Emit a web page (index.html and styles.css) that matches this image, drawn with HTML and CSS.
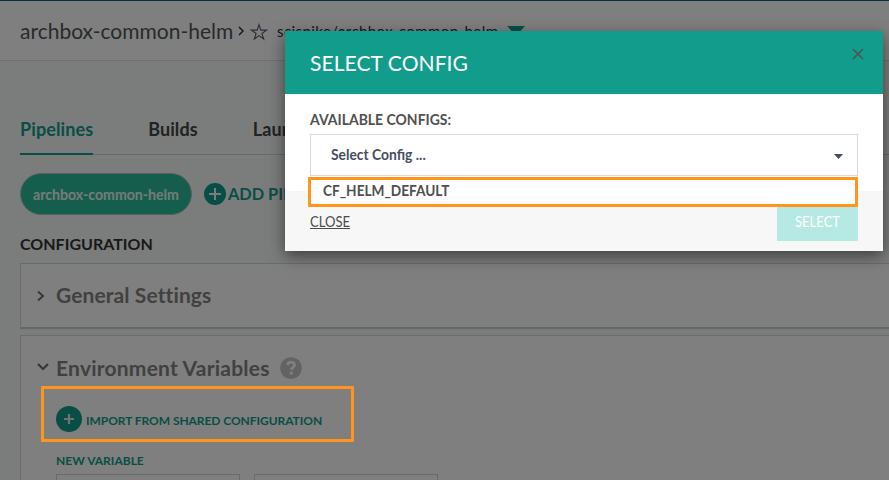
FILE: index.html
```html
<!DOCTYPE html>
<html lang="en">
<head>
<meta charset="utf-8">
<title>archbox-common-helm</title>
<link rel="stylesheet" href="styles.css">
</head>
<body>
<div class="page">
  <header class="topbar">
    <span class="repo">archbox-common-helm</span>
    <svg class="crumb" width="7" height="10" viewBox="0 0 7 10"><path d="M1 1l4 4-4 4" fill="none" stroke="#333" stroke-width="1.5"/></svg>
    <svg class="star" width="18" height="18" viewBox="0 0 18 18"><path d="M9 1.6l1.8 5.5h5.7l-4.6 3.4 1.8 5.5L9 12.6 4.3 16l1.8-5.5-4.6-3.4h5.7z" fill="none" stroke="#565c70" stroke-width="1.1"/></svg>
    <span class="path">scispike/archbox-common-helm</span>
    <svg class="drop" width="18" height="10" viewBox="0 0 18 10"><path d="M0 0h18l-9 10z" fill="#119c8c"/></svg>
  </header>
  <main class="content">
    <nav class="tabs">
      <a class="tab active"><span>Pipelines</span></a>
      <a class="tab"><span>Builds</span></a>
      <a class="tab"><span>Launch</span></a>
    </nav>
    <div class="pipelines">
      <span class="pill"><span>archbox-common-helm</span></span>
      <svg width="22" height="22" viewBox="0 0 22 22"><circle cx="11" cy="11" r="11" fill="#119c8c"/><path d="M5 11h12M11 5v12" stroke="#f5fbf9" stroke-width="2"/></svg>
      <span class="add">ADD PIPELINE</span>
    </div>
    <h2>CONFIGURATION</h2>
    <section class="card general">
      <svg class="arrow" width="8" height="12" viewBox="0 0 8 12"><path d="M1 1.5l5 4.5-5 4.5" fill="none" stroke="#6e6e6e" stroke-width="2"/></svg>
      <h3 class="gs">General Settings</h3>
    </section>
    <section class="card env">
      <div class="env-head">
        <svg class="arrow-down" width="12" height="8" viewBox="0 0 12 8"><path d="M1 1l5 5 5-5" fill="none" stroke="#6e6e6e" stroke-width="2.2"/></svg>
        <h3 class="ev">Environment Variables</h3>
        <svg class="help" width="22" height="22" viewBox="0 0 22 22"><circle cx="11" cy="11" r="10.8" fill="#c6c6c6"/><path d="M7.5 8.2C7.7 6.2 9.2 5.1 11.1 5.1c2 0 3.5 1.1 3.5 2.9 0 2.4-3.2 2.4-3.2 5" fill="none" stroke="#fff" stroke-width="2.6"/><path d="M9.8 14.6h3v3h-3z" fill="#fff"/></svg>
      </div>
      <div class="import">
        <svg width="26" height="26" viewBox="0 0 26 26"><circle cx="13" cy="13" r="13" fill="#119c8c"/><path d="M8 13h10M13 8v10" stroke="#e4e4e4" stroke-width="2.2"/></svg>
        <span>IMPORT FROM SHARED CONFIGURATION</span>
      </div>
      <div class="newvar"><span>NEW VARIABLE</span></div>
      <div class="fields"><div class="field"></div><div class="field"></div></div>
    </section>
  </main>
</div>
<div class="overlay"></div>
<div class="mark mark-import"></div>
<div class="modal">
  <div class="modal-head">
    <span class="modal-title">SELECT CONFIG</span>
    <svg class="close" width="12" height="12" viewBox="0 0 12 12"><path d="M1 1l10 10M11 1L1 11" stroke="#505457" stroke-width="1.6"/></svg>
  </div>
  <div class="modal-body">
    <div class="label"><span>AVAILABLE CONFIGS:</span></div>
    <div class="select">
      <span>Select Config ...</span>
      <svg width="9" height="5" viewBox="0 0 9 5"><path d="M0 0h9L4.5 5z" fill="#454e5e"/></svg>
    </div>
  </div>
  <div class="modal-foot">
    <span class="close-link">CLOSE</span>
    <span class="select-btn"><span>SELECT</span></span>
  </div>
  <div class="option"><span>CF_HELM_DEFAULT</span></div>
</div>
</body>
</html>
```
FILE: styles.css
```css
* { box-sizing: border-box; }
body { margin: 0; font-family: Lato, "Liberation Sans", sans-serif; }
span, h2, h3 { white-space: nowrap; }
svg { display: block; flex: none; }
.page { width: 889px; height: 480px; overflow: hidden; background: #f6fbf9; }
.topbar { display: flex; height: 61px; border-top: 1px solid #006775; border-bottom: 1px solid #dce2e0; background: #fff; padding-left: 20px; }
.repo { width: 218px; font-size: 21px; line-height: 60px; color: #4e5658; }
.crumb { margin-top: 25px; }
.star { margin: 22px 9px 0 5px; }
.path { width: 230px; font-size: 15px; letter-spacing: .43px; line-height: 61px; color: #2e3236; }
.drop { margin-top: 25px; }
.content { padding: 44px 0 0 20px; }
.tabs { display: flex; gap: 55px; height: 50px; border-bottom: 1px solid #d0d6d4; }
.tab { height: 50px; font-size: 18px; letter-spacing: .1px; font-weight: 700; line-height: 48px; color: #444; }
.active { color: #119c8c; border-bottom: 2px solid #119c8c; }
.pipelines { display: flex; align-items: center; height: 42px; margin-top: 18px; }
.pill { width: 172px; height: 42px; margin-right: 12px; padding-left: 12px; border: 1px solid #b9bfbd; border-radius: 21px; background: #2bbd9d; color: #e6f8f4; font-size: 15px; font-weight: 700; line-height: 41px; }
.pill span, .label span, .select span, .select-btn span, .option span { display: inline-block; transform-origin: 0 50%; }
.pill span { transform: scaleX(.942); }
.add { margin-left: 2px; font-size: 17px; font-weight: 700; line-height: 20px; color: #119c8c; transform: scaleX(.96); transform-origin: 0 50%; }
h2 { height: 48px; margin: 0; font-size: 16px; line-height: 58px; color: #333; }
h3 { margin: 0 0 2px; font-size: 21px; font-weight: 700; letter-spacing: .1px; color: #828282; }
.ev { letter-spacing: .22px; }
.card { width: 900px; border: 1px solid #d4d9d8; background: #fff; }
.general { display: flex; align-items: center; height: 66px; padding-left: 16px; gap: 11px; border-bottom: 2px solid #c9cecd; }
.env { height: 160px; margin-top: 6px; padding-top: 20px; }
.env-head { display: flex; align-items: center; height: 25px; padding-left: 16px; gap: 7px; }
.arrow-down { margin-bottom: 4px; }
.help { margin: 0 0 1px 3px; }
.import { display: flex; align-items: center; gap: 4px; height: 26px; margin: 25px 0 0 35px; font-size: 12px; letter-spacing: -.06px; font-weight: 700; line-height: 28px; color: #119c8c; }
.import span { margin-top: 3px; }
.newvar { height: 42px; padding-left: 35px; font-size: 12px; font-weight: 700; line-height: 57px; color: #119c8c; }
.fields { display: flex; gap: 14px; padding-left: 35px; }
.field { width: 184px; height: 34px; border: 1px solid #d4d4d4; }
.overlay { position: absolute; inset: 0; height: 480px; background: rgba(0, 0, 0, .5); }
.mark { position: absolute; border: 3px solid #ff951c; border-radius: 1px; }
.mark-import { left: 41px; top: 386px; width: 313px; height: 56px; }
.modal { position: absolute; left: 285px; top: 31px; width: 598px; height: 220px; background: #fff; box-shadow: 0 5px 15px rgba(0, 0, 0, .5); }
.modal-head { display: flex; justify-content: space-between; height: 63px; padding: 0 19px 0 25px; background: #119c8c; }
.modal-title { font-size: 21px; letter-spacing: .08px; line-height: 64px; color: #fff; }
.close { margin-top: 17px; }
.modal-body { height: 97px; padding: 15px 25px 0; }
.label { height: 25px; font-size: 15px; font-weight: 700; line-height: 21px; color: #505050; }
.label span { transform: scaleX(.932); }
.select { display: flex; align-items: center; justify-content: space-between; height: 42px; padding: 0 14px 0 20px; border: 1px solid #d6dada; font-size: 15px; font-weight: 700; color: #454e5e; }
.select span { margin-bottom: 2px; transform: scaleX(.925); }
.select svg { margin-top: 2px; }
.modal-foot { display: flex; justify-content: space-between; height: 60px; padding: 0 25px; background: #f7f7f7; }
.close-link { font-size: 15px; line-height: 60px; color: #4c4c4c; text-decoration: underline; transform: scaleX(.87); transform-origin: 0 50%; }
.select-btn { width: 81px; height: 40px; margin-top: 10px; padding-left: 18px; background: #b6e9e3; font-size: 15px; line-height: 40px; color: #fff; }
.select-btn span { transform: scaleX(.87); }
.option { position: absolute; left: 23px; top: 146px; width: 550px; height: 30px; padding-left: 12px; border: 3px solid #ff951c; border-radius: 1px; background: #fff; font-size: 15px; font-weight: 700; line-height: 21px; color: #505050; }
.option span { transform: scaleX(.91); }
```
